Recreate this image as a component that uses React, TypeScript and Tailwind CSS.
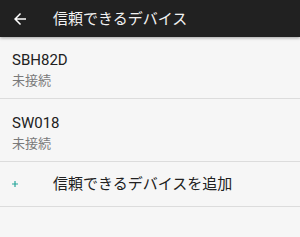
import React from "react";

export default function App() {
  const font = { fontFamily: 'Roboto, "Noto Sans CJK JP", sans-serif' };
  return (
    <div className="w-[300px] h-[237px] bg-[#f6f6f6] overflow-hidden" style={font}>
      <div className="h-[37px] bg-[#212121] flex items-center relative z-10 shadow-[0_1px_3px_rgba(0,0,0,0.35)]">
        <svg width="18" height="18" viewBox="0 0 24 24" className="ml-[11px]" fill="#ffffff">
          <path d="M20 11H7.83l5.59-5.59L12 4l-8 8 8 8 1.41-1.41L7.83 13H20v-2z" />
        </svg>
        <span className="ml-[24px] text-[15px] leading-[20px] text-[#f2f2f2]">信頼できるデバイス</span>
      </div>
      <div className="flex flex-col">
        <div className="h-[62px] border-b border-[#dcdcdc] px-[12px] pt-[13px] flex flex-col">
          <span className="text-[15px] leading-[20px] text-[#212121]">SBH82D</span>
          <span className="mt-[2px] text-[13px] leading-[17px] text-[#7a7a7a]">未接続</span>
        </div>
        <div className="h-[63px] border-b border-[#dcdcdc] px-[12px] pt-[14px] flex flex-col">
          <span className="text-[15px] leading-[20px] text-[#212121]">SW018</span>
          <span className="mt-[2px] text-[13px] leading-[17px] text-[#7a7a7a]">未接続</span>
        </div>
        <div className="h-[45px] border-b border-[#dcdcdc] flex items-center">
          <svg width="6" height="6" viewBox="0 0 6 6" className="ml-[12px]">
            <path d="M3 0V6M0 3H6" stroke="#26a69a" strokeWidth="1.2" />
          </svg>
          <span className="ml-[35px] text-[15px] leading-[20px] text-[#212121]">信頼できるデバイスを追加</span>
        </div>
      </div>
    </div>
  );
}
